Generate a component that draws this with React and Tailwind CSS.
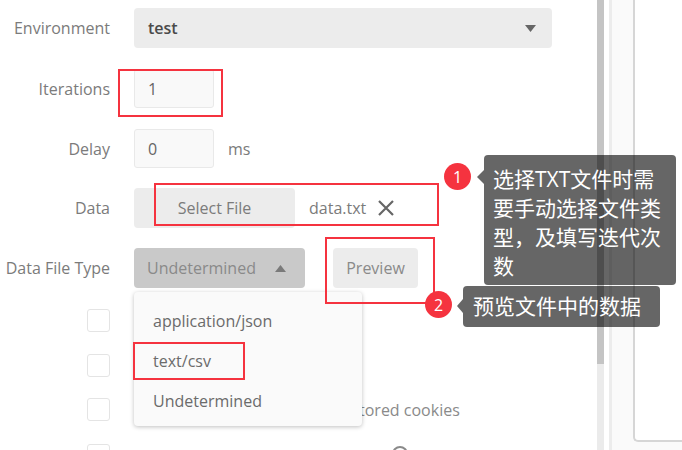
const font = { fontFamily: '"Open Sans", "Noto Sans CJK SC", sans-serif' };

const Caret = ({ up, className }) => (
  <svg width="11" height="7" viewBox="0 0 11 7" className={className}>
    {up ? <path d="M0 7 L5.5 0 L11 7 Z" fill="currentColor" /> : <path d="M0 0 L11 0 L5.5 7 Z" fill="currentColor" />}
  </svg>
);

const Row = ({ label, top, children }) => (
  <div className={`flex items-center h-[40px] ${top}`}>
    <div className="w-[110px] shrink-0 text-right text-[16px] text-[#7b7b7b]">{label}</div>
    <div className="ml-[24px] flex items-center h-full">{children}</div>
  </div>
);

const CheckRow = ({ label, top }) => (
  <div className={`flex items-center h-[23px] pl-[87px] ${top}`}>
    <div className="w-[23px] h-[23px] shrink-0 rounded-[3px] border-[1.5px] border-[#e4e4e4] bg-white" />
    {label && <span className="ml-[27px] text-[16px] text-[#8a8a8a] whitespace-nowrap">{label}</span>}
  </div>
);

const Badge = ({ n, className }) => (
  <div className={`absolute w-[27px] h-[27px] rounded-full bg-[#f5333f] text-white text-[16px] flex items-center justify-center ${className}`}>
    {n}
  </div>
);

export default function App() {
  return (
    <div className="relative flex w-[682px] h-[450px] overflow-hidden bg-white" style={font}>
      {/* form */}
      <div className="w-[597px] shrink-0 flex flex-col">
        <Row label="Environment" top="mt-[8px]">
          <div className="w-[418px] h-[40px] rounded-[4px] bg-[#ececec] flex items-center justify-between pl-[14px] pr-[16px]">
            <span className="text-[16px] font-semibold text-[#4a4a4a]">test</span>
            <Caret className="text-[#666]" />
          </div>
        </Row>
        <Row label="Iterations" top="mt-[21px]">
          <div className="w-[80px] h-[39px] rounded-[3px] border border-[#e9e9e9] bg-[#f9f9f9] flex items-center pl-[13px] text-[16px] text-[#666]">1</div>
        </Row>
        <Row label="Delay" top="mt-[21px]">
          <div className="w-[80px] h-[39px] rounded-[3px] border border-[#e9e9e9] bg-[#f9f9f9] flex items-center pl-[13px] text-[16px] text-[#666]">0</div>
          <span className="ml-[14px] text-[16px] text-[#7b7b7b]">ms</span>
        </Row>
        <Row label="Data" top="mt-[20px]">
          <div className="w-[161px] h-[40px] rounded-[4px] bg-[#ececec] flex items-center justify-center text-[16px] text-[#7b7b7b]">Select File</div>
          <span className="ml-[14px] text-[16px] text-[#7b7b7b]">data.txt</span>
          <svg width="18" height="18" viewBox="0 0 18 18" className="ml-[11px]">
            <path d="M2 2 L16 16 M16 2 L2 16" stroke="#666" strokeWidth="2.2" />
          </svg>
        </Row>
        <Row label="Data File Type" top="mt-[20px]">
          <div className="w-[171px] h-[40px] rounded-[4px] bg-[#c9c9c9] flex items-center justify-between pl-[13px] pr-[19px]">
            <span className="text-[16px] text-[#8a8a8a]">Undetermined</span>
            <Caret up className="text-[#7a7a7a]" />
          </div>
          <div className="ml-[28px] w-[85px] h-[40px] rounded-[4px] bg-[#ececec] flex items-center justify-center text-[16px] text-[#8a8a8a]">Preview</div>
        </Row>
        <CheckRow label="Save responses" top="mt-[21px]" />
        <CheckRow label="Keep variable values" top="mt-[22px]" />
        <CheckRow label="Run collection without using stored cookies" top="mt-[21px]" />
        <div className="flex items-start h-[23px] pl-[87px] mt-[23px]">
          <div className="w-[23px] h-[23px] shrink-0 rounded-[3px] border-[1.5px] border-[#e4e4e4] bg-white" />
          <span className="ml-[282px] mt-[2px] w-[16px] h-[16px] rounded-full border-2 border-[#8a8a8a]" />
        </div>
      </div>

      {/* scrollbar */}
      <div className="w-[7px] shrink-0 flex flex-col">
        <div className="h-[364px] bg-[#c4c4c4]" />
        <div className="flex-1 bg-[#ebebeb]" />
      </div>

      {/* side panel */}
      <div className="ml-[5px] flex-1 border-l-[3px] border-[#ececec] bg-[#fafafa] pl-[21px]">
        <div className="h-[442px] border-l-2 border-b-2 border-[#d6d6d6] rounded-bl-[5px] bg-white" />
      </div>

      {/* dropdown menu */}
      <div className="absolute left-[134px] top-[292px] w-[228px] h-[134px] rounded-[4px] bg-[#fafafa] shadow-[0_1px_4px_rgba(0,0,0,0.25)] pt-[9px]">
        {['application/json', 'text/csv', 'Undetermined'].map((t) => (
          <div key={t} className="h-[40px] flex items-center pl-[19px] text-[16px] text-[#6b6b6b]">{t}</div>
        ))}
      </div>

      {/* annotation boxes */}
      <div className="absolute left-[118px] top-[69px] w-[105px] h-[48px] border-2 border-[#f5333f]" />
      <div className="absolute left-[154px] top-[183px] w-[285px] h-[43px] border-2 border-[#f5333f]" />
      <div className="absolute left-[325px] top-[237px] w-[110px] h-[67px] border-2 border-[#f5333f]" />
      <div className="absolute left-[133px] top-[342px] w-[112px] h-[38px] border-2 border-[#f5333f]" />

      {/* tooltip 1 */}
      <Badge n="1" className="left-[444px] top-[163px]" />
      <div className="absolute left-[484px] top-[155px] w-[192px] h-[130px] rounded-[4px] bg-[rgba(0,0,0,0.6)] pt-[10px] pl-[9px] text-white text-[21px] leading-[29px]">
        <div className="absolute left-[-7px] top-[15px] w-0 h-0 border-y-[7px] border-y-transparent border-r-[7px] border-r-[rgba(0,0,0,0.6)]" />
        <div>选择TXT文件时需</div>
        <div>要手动选择文件类</div>
        <div>型，及填写迭代次</div>
        <div>数</div>
      </div>

      {/* tooltip 2 */}
      <Badge n="2" className="left-[425px] top-[291px]" />
      <div className="absolute left-[463px] top-[286px] w-[197px] h-[41px] rounded-[4px] bg-[rgba(0,0,0,0.6)] pl-[10px] flex items-center text-white text-[21px]">
        <div className="absolute left-[-6px] top-[13px] w-0 h-0 border-y-[7px] border-y-transparent border-r-[6px] border-r-[rgba(0,0,0,0.6)]" />
        预览文件中的数据
      </div>
    </div>
  );
}
